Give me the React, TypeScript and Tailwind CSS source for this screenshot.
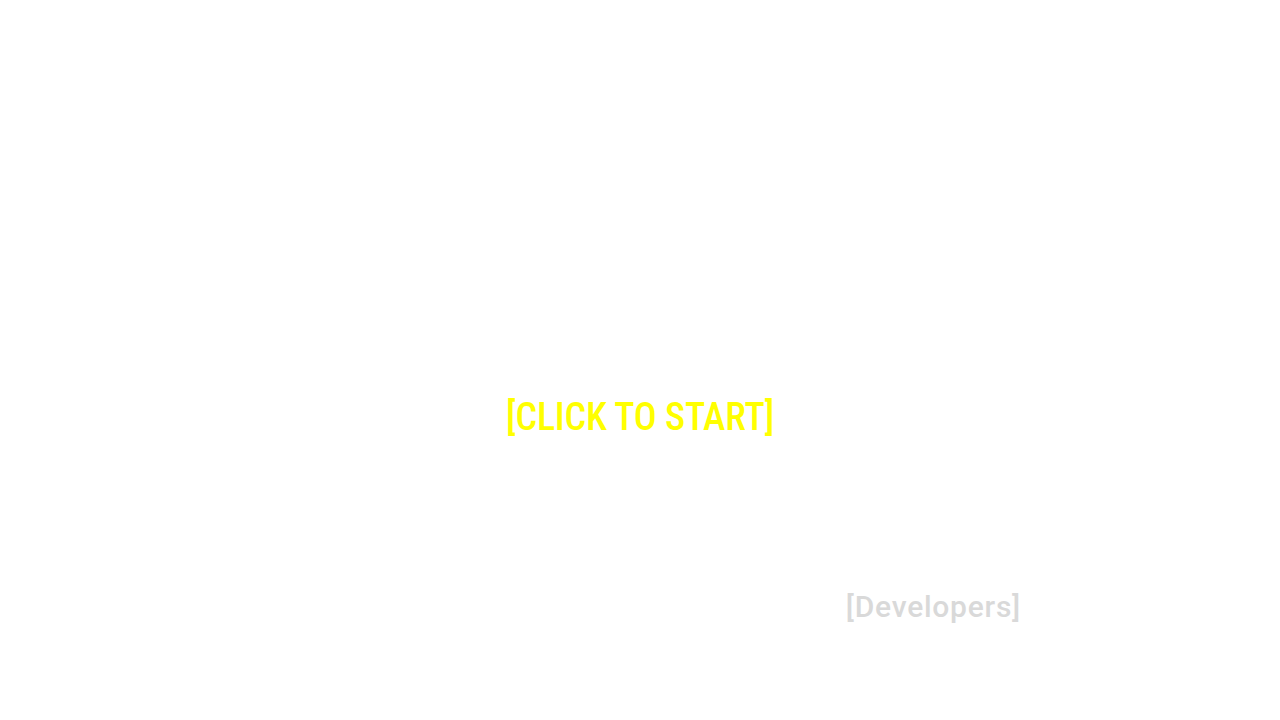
export default function App() {
  return (
    <div
      className="w-[1280px] h-[720px] bg-white flex flex-col"
      style={{ fontFamily: 'Roboto, "Open Sans", sans-serif' }}
    >
      <div className="pt-[396px] flex justify-center">
        <button className="text-[38px] leading-[42px] font-medium [font-stretch:condensed] tracking-[-0.2px] text-[#ffff00] cursor-pointer">[CLICK TO START]</button>
      </div>
      <div className="pt-[152px] flex justify-end pr-[259px]">
        <button className="text-[30px] leading-[34px] font-medium tracking-[0.75px] text-[#d9d9d9] cursor-pointer">[Developers]</button>
      </div>
    </div>
  );
}
